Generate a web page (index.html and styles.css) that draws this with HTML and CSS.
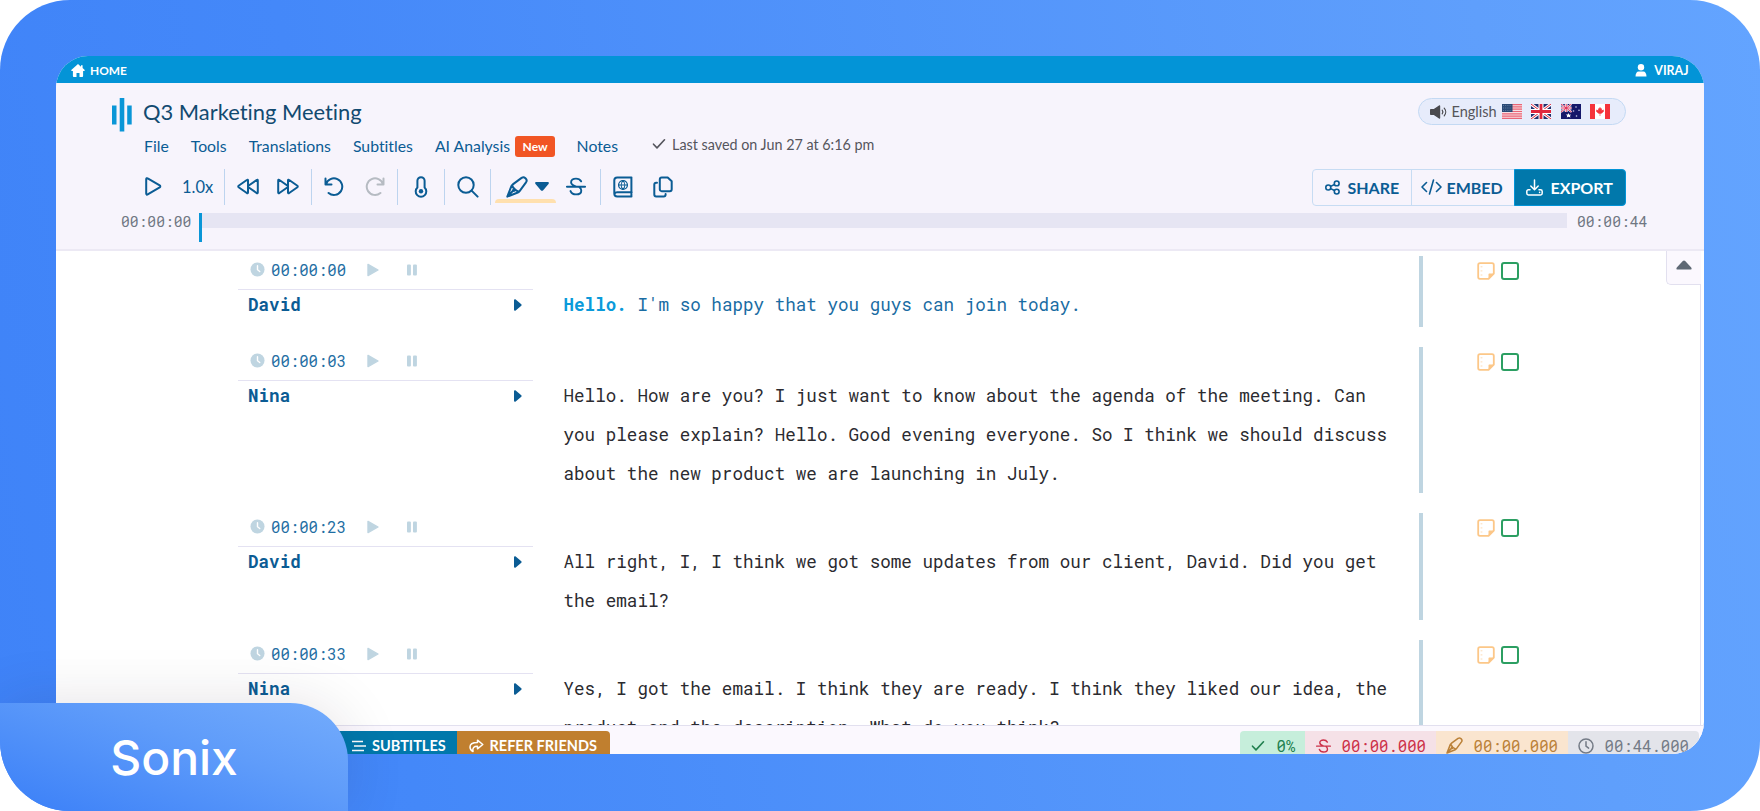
FILE: index.html
```
<!DOCTYPE html>
<html lang="en">
<head>
  <meta charset="UTF-8">
  <meta name="viewport" content="width=device-width, initial-scale=1.0">
  <title>Q3 Marketing Meeting</title>
  <link rel="stylesheet" href="styles.css">
</head>
<body>
  <!-- shared icons -->
  <svg class="defs" width="0" height="0">
    <symbol id="i-clock" viewBox="0 0 16 16"><circle cx="8" cy="8" r="7.5" fill="currentColor"/><path d="M8 4v4.2l2.4 1.9" fill="none" stroke="#fff" stroke-width="1.5" stroke-linecap="round"/></symbol>
    <symbol id="i-play" viewBox="0 0 12 14"><path d="M1 1.4v11.2l10-5.6z" fill="currentColor" stroke="currentColor" stroke-width="1.4" stroke-linejoin="round"/></symbol>
    <symbol id="i-pause" viewBox="0 0 12 12"><rect x="1" y="0.5" width="3.9" height="11" rx="1" fill="currentColor"/><rect x="7" y="0.5" width="3.9" height="11" rx="1" fill="currentColor"/></symbol>
    <symbol id="i-caret" viewBox="0 0 8 12"><path d="M0 1.2C0 .2 1 0 1.7.6l5.600 4.600c.5.5.5 1.100 0 1.600l-5.600 4.600C1 12 0 11.800 0 10.800z" fill="currentColor"/></symbol>
    <symbol id="i-note" viewBox="0 0 18 18"><path d="M3 1.200h12c1 0 1.800.8 1.800 1.800v8.600l-5.200 5.200H3c-1 0-1.800-.8-1.800-1.800V3c0-1 .8-1.800 1.800-1.800z" fill="none" stroke="currentColor" stroke-width="1.800"/><path d="M17 11.400h-4.500c-.6 0-1 .4-1 1V17z" fill="currentColor"/><path d="M3.600 4.800h1.800M3.600 8.900h1.800M3.600 13h1.800" stroke="currentColor" stroke-width="1" opacity=".6"/></symbol>
    <symbol id="i-pen" viewBox="0 0 22 22"><path d="M1.300 20.600 5.400 10.200c.3-.8.800-1.300 1.400-1.800L15.600 1.900c1.300-.9 2.500-.9 3.500.1l.8.8c1 1 1 2.200.1 3.500l-6.400 8.800c-.5.700-1.100 1.100-1.800 1.400z M6 9.200c1 2.800 3.600 5.400 6.800 6.500M1.600 20.300l5.400-5.600" fill="none" stroke="currentColor" stroke-width="2" stroke-linejoin="round"/><circle cx="7.800" cy="14.200" r="1.700" fill="currentColor"/></symbol>
    <symbol id="i-strike" viewBox="0 0 22 20"><path d="M1 10.200h20M16.600 4.300C15.300 2 13.500 1.300 11 1.300c-3.200 0-5.400 1.500-5.400 3.900 0 2.300 1.700 3.400 5 4.600M5 15c1 2.500 3.200 3.700 6 3.700 3.500 0 5.800-1.700 5.800-4.100 0-1.500-.6-2.700-1.800-3.500" fill="none" stroke="currentColor" stroke-width="2.100" stroke-linecap="round"/></symbol>
    <symbol id="i-check" viewBox="0 0 14 12"><path d="M1.500 6.200 5 9.900 12.500 1.800" fill="none" stroke="currentColor" stroke-width="1.600" stroke-linecap="round" stroke-linejoin="round"/></symbol>
  </svg>

  <div class="frame">
    <div class="window">
      <div class="topbar">
        <a class="home">
          <svg width="14" height="13" viewBox="0 0 14 13"><path d="M7 0 0 6.300l.9.8h1V12c0 .6.3 1 .9 1h2.700V9h3v4h2.700c.6 0 .9-.4.900-1V7.100h1l.9-.8-2.400-2.200V1.200H10v1.500z" fill="#fff"/></svg>
          HOME
        </a>
        <a class="user">
          <svg width="12" height="13" viewBox="0 0 12 13"><circle cx="6" cy="3.200" r="3.200" fill="#fff"/><path d="M.5 12.500c0-3 1.200-5 3.200-5h4.600c2 0 3.200 2 3.200 5z" fill="#fff"/></svg>
          VIRAJ
        </a>
      </div>

      <div class="header">
        <div class="head-row">
          <svg class="logo" width="20" height="34" viewBox="0 0 20 34"><path d="M0 7.500h4.500v19H0zM7.700 0h4.600v33.500H7.700zM15.200 7.500h4.500v19h-4.500z" fill="#0a96d7"/></svg>
          <h1 class="title">Q3 Marketing Meeting</h1>
          <div class="lang">
            <svg class="speaker" width="17" height="14" viewBox="0 0 17 14"><path d="M0 4.800c0-.5.300-.8.800-.8h3L9 .4c.6-.4 1.200-.2 1.200.5v12.200c0 .7-.6.900-1.200.5L3.800 10h-3C.3 10 0 9.700 0 9.200z" fill="#4a4a4e"/><path d="M12.200 5.200c.8 1 .8 2.600 0 3.600M14.200 3.200c2 2.200 2 5.400 0 7.600" fill="none" stroke="#4a4a4e" stroke-width="1.200" stroke-linecap="round"/></svg>
            <span class="lang-name">English</span>
            <svg class="flag" width="20" height="15" viewBox="0 0 20 15"><path fill="#f8dfe3" d="M0 0h20v15H0z"/><path d="M0 .6h20M0 2.900h20M0 5.200h20M0 7.500h20M0 9.800h20M0 12.100h20M0 14.400h20" stroke="#ea6577" stroke-width="1.200"/><path fill="#2a4a75" d="M0 0h10.500v8H0z"/><path d="M1 1.500h9M1 4h9M1 6.500h9" stroke="#6d87a8" stroke-width=".8" stroke-dasharray="1 1.200"/></svg>
            <svg class="flag" width="20" height="15" viewBox="0 0 20 15"><path fill="#22306f" d="M0 0h20v15H0z"/><path d="m0 0 20 15M20 0 0 15" stroke="#fff" stroke-width="3"/><path d="m0 0 20 15M20 0 0 15" stroke="#e0253c" stroke-width="1"/><path d="M10 0v15M0 7.500h20" stroke="#fff" stroke-width="5"/><path d="M10 0v15M0 7.500h20" stroke="#e0253c" stroke-width="2.800"/></svg>
            <svg class="flag" width="20" height="15" viewBox="0 0 20 15"><path fill="#15176a" d="M0 0h20v15H0z"/><path d="m0 0 10.500 8M10.500 0 0 8" stroke="#fff" stroke-width="1.800"/><path d="M5.200 0v8M0 4h10.500" stroke="#fff" stroke-width="2.800"/><path d="M5.200 0v8M0 4h10.500M0 0l10.500 8M10.500 0 0 8" stroke="#e0335a" stroke-width="1"/><path d="m7.500 9 .8 1.700 1.800-.2-1.200 1.400.7 1.700-2.100-.8-1.700.8.400-1.800-1.300-1.300 1.900-.1z" fill="#fff"/><g fill="#cdd0ea"><circle cx="15" cy="3" r=".8"/><circle cx="12.500" cy="7" r=".8"/><circle cx="18" cy="6.200" r=".8"/><circle cx="15.500" cy="12" r=".8"/></g></svg>
            <svg class="flag" width="20" height="15" viewBox="0 0 20 15"><path fill="#fff" d="M0 0h20v15H0z"/><path fill="#f5333b" d="M0 0h5v15H0zM15 0h5v15h-5zM10 2.800l1 1.900 1-.5-.3 2.200 1.700-.8.6 1.600-2.300 2.400-1.400.2V12h-.6V9.800l-1.400-.2L6 7.200l.6-1.600 1.700.8L8 4.200l1 .5z"/></svg>
          </div>
        </div>

        <div class="menu">
          <a class="m-file">File</a>
          <a class="m-tools">Tools</a>
          <a class="m-trans">Translations</a>
          <a class="m-subs">Subtitles</a>
          <a class="m-ai">AI Analysis</a>
          <span class="badge">New</span>
          <a class="m-notes">Notes</a>
          <span class="saved"><svg width="14" height="12"><use href="#i-check"/></svg>Last saved on Jun 27 at 6:16 pm</span>
        </div>

        <div class="toolbar">
          <div class="group g-play">
            <svg width="17" height="19" viewBox="0 0 17 19"><path d="M1.200 2.200c0-1 .7-1.300 1.500-.8l12 7c.8.500.8 1.500 0 2l-12 7c-.8.500-1.500.1-1.500-.8z" class="ln"/></svg>
            <span class="speed">1.0x</span>
          </div>
          <div class="group g-seek">
            <svg width="22" height="17" viewBox="0 0 22 17"><path d="M11 2.500v12c0 .8-.6 1-1.200.5L1.600 9.200c-.5-.4-.5-1 0-1.400L9.800 2c.6-.5 1.200-.3 1.200.5zM20.800 2.500v12c0 .8-.6 1-1.200.5l-8.200-5.800c-.5-.4-.5-1 0-1.400L19.600 2c.6-.5 1.200-.3 1.200.5z" class="ln"/></svg>
            <svg width="22" height="17" viewBox="0 0 22 17"><path d="M11 2.500v12c0 .8.600 1 1.200.5l8.200-5.800c.5-.4.5-1 0-1.400L12.200 2c-.6-.5-1.200-.3-1.200.5zM1.200 2.500v12c0 .8.600 1 1.200.5l8.200-5.800c.5-.4.5-1 0-1.400L2.400 2c-.6-.5-1.200-.3-1.200.5z" class="ln"/></svg>
          </div>
          <div class="group g-undo">
            <svg width="20" height="20" viewBox="0 0 20 20"><path d="M1.500 1.500v6h6M2 7.300A8.300 8.300 0 1 1 4.600 16" class="ln"/></svg>
            <svg class="muted" width="20" height="20" viewBox="0 0 20 20"><path d="M18.500 1.500v6h-6M18 7.300A8.300 8.300 0 1 0 15.400 16" class="ln"/></svg>
          </div>
          <div class="group g-temp">
            <svg width="14" height="22" viewBox="0 0 14 22"><path d="M7 1.200A3.600 3.600 0 0 0 3.400 4.800v6.700a5.300 5.300 0 1 0 7.200 0V4.800A3.600 3.600 0 0 0 7 1.200z" class="ln"/><circle cx="7" cy="15.300" r="2.200" fill="currentColor"/></svg>
          </div>
          <div class="group g-find">
            <svg width="22" height="22" viewBox="0 0 22 22"><circle cx="9" cy="9" r="7.700" class="ln"/><path d="m14.600 14.600 6 6" class="ln"/></svg>
          </div>
          <div class="group g-mark">
            <span class="marker">
              <svg width="22" height="22"><use href="#i-pen"/></svg>
              <svg width="14" height="9" viewBox="0 0 14 9"><path d="M1.200 0h11.600c1 0 1.400 1.100.7 1.900L8.200 8.200c-.7.700-1.700.7-2.400 0L.5 1.900C-.2 1.100.2 0 1.200 0z" fill="currentColor"/></svg>
            </span>
            <svg width="20" height="19"><use href="#i-strike"/></svg>
          </div>
          <div class="group g-last">
            <svg width="20" height="22" viewBox="0 0 20 22"><path d="M18.700 16.200H4M18.500 1.500H4.200c-1.600 0-2.900 1.200-2.900 2.800v13.200c0 1.700 1.300 3 2.900 3H18.500M18.400 1.500v19M1.500 18c.3-1.200 1.300-1.800 2.500-1.800" class="ln"/><circle cx="10" cy="9" r="4.400" fill="none" stroke="currentColor" stroke-width="1.300"/><path d="M5.600 9h8.800M10 4.600c-2.400 2.600-2.400 6.200 0 8.800 2.400-2.600 2.400-6.200 0-8.800z" fill="none" stroke="currentColor" stroke-width="1.100"/></svg>
            <svg width="20" height="22" viewBox="0 0 20 22"><path d="M8.700 1.500h6l4 3.800v8c0 1.100-.8 1.900-1.900 1.900H8.700c-1.100 0-1.900-.8-1.900-1.900V3.400c0-1.100.8-1.900 1.900-1.900z" class="ln"/><path d="M4 6.700H3.200c-1.100 0-1.900.8-1.900 1.900v10c0 1.100.8 1.900 1.900 1.900h7.500c1.100 0 1.900-.8 1.900-1.900v-.5" class="ln"/></svg>
          </div>
          <div class="actions">
            <a class="act share"><svg width="15" height="15" viewBox="0 0 15 15"><g fill="none" stroke="currentColor" stroke-width="1.600"><circle cx="3.300" cy="7.500" r="2.500"/><circle cx="11.700" cy="3.400" r="2.400"/><circle cx="11.700" cy="11.600" r="2.400"/><path d="m5.600 6.400 3.900-1.900M5.600 8.600l3.900 1.900"/></g></svg>SHARE</a>
            <a class="act embed"><svg width="21" height="16" viewBox="0 0 21 16"><path d="M5.500 3.500 1 8l4.500 4.500M15.500 3.500 20 8l-4.500 4.500M12.500 1l-4 14" fill="none" stroke="currentColor" stroke-width="1.600" stroke-linecap="round" stroke-linejoin="round"/></svg>EMBED</a>
            <a class="act export"><svg width="17" height="17" viewBox="0 0 17 17"><path d="M8.500 1v9.500M4.800 7l3.700 3.700L12.200 7M4 10.800H2.400c-.9 0-1.600.7-1.600 1.600v1.800c0 1 .7 1.700 1.600 1.700h12.200c.9 0 1.600-.7 1.600-1.700v-1.800c0-.9-.7-1.600-1.600-1.600H13" fill="none" stroke="currentColor" stroke-width="1.500" stroke-linecap="round" stroke-linejoin="round"/><circle cx="13.600" cy="13.400" r=".8" fill="currentColor"/></svg>EXPORT</a>
          </div>
        </div>

        <div class="timeline">
          <span class="time">00:00:00</span>
          <div class="track"><div class="cursor"></div></div>
          <span class="time">00:00:44</span>
        </div>
      </div>

      <div class="content">
        <div class="transcript">
          <div class="row">
            <div class="speaker-col">
              <div class="stamp"><svg class="s-clock" width="15" height="15"><use href="#i-clock"/></svg>00:00:00<svg class="s-play" width="12" height="14"><use href="#i-play"/></svg><svg class="s-pause" width="12" height="12"><use href="#i-pause"/></svg></div>
              <div class="name">David<svg width="8" height="12"><use href="#i-caret"/></svg></div>
            </div>
            <p class="text current"><b>Hello.</b> I'm so happy that you guys can join today.</p>
            <div class="marks"><svg width="18" height="18"><use href="#i-note"/></svg><i class="box"></i></div>
          </div>
          <div class="row">
            <div class="speaker-col">
              <div class="stamp"><svg class="s-clock" width="15" height="15"><use href="#i-clock"/></svg>00:00:03<svg class="s-play" width="12" height="14"><use href="#i-play"/></svg><svg class="s-pause" width="12" height="12"><use href="#i-pause"/></svg></div>
              <div class="name">Nina<svg width="8" height="12"><use href="#i-caret"/></svg></div>
            </div>
            <p class="text">Hello. How are you? I just want to know about the agenda of the meeting. Can<br>you please explain? Hello. Good evening everyone. So I think we should discuss<br>about the new product we are launching in July.</p>
            <div class="marks"><svg width="18" height="18"><use href="#i-note"/></svg><i class="box"></i></div>
          </div>
          <div class="row">
            <div class="speaker-col">
              <div class="stamp"><svg class="s-clock" width="15" height="15"><use href="#i-clock"/></svg>00:00:23<svg class="s-play" width="12" height="14"><use href="#i-play"/></svg><svg class="s-pause" width="12" height="12"><use href="#i-pause"/></svg></div>
              <div class="name">David<svg width="8" height="12"><use href="#i-caret"/></svg></div>
            </div>
            <p class="text">All right, I, I think we got some updates from our client, David. Did you get<br>the email?</p>
            <div class="marks"><svg width="18" height="18"><use href="#i-note"/></svg><i class="box"></i></div>
          </div>
          <div class="row">
            <div class="speaker-col">
              <div class="stamp"><svg class="s-clock" width="15" height="15"><use href="#i-clock"/></svg>00:00:33<svg class="s-play" width="12" height="14"><use href="#i-play"/></svg><svg class="s-pause" width="12" height="12"><use href="#i-pause"/></svg></div>
              <div class="name">Nina<svg width="8" height="12"><use href="#i-caret"/></svg></div>
            </div>
            <p class="text">Yes, I got the email. I think they are ready. I think they liked our idea, the<br>product and the description. What do you think?</p>
            <div class="marks"><svg width="18" height="18"><use href="#i-note"/></svg><i class="box"></i></div>
          </div>
        </div>
        <div class="side">
          <a class="collapse"><svg width="16" height="10" viewBox="0 0 16 10"><path d="M1.600 9.500C.4 9.500 0 8.300.8 7.400L6.800 1c.7-.7 1.700-.7 2.400 0l6 6.400c.8.900.4 2.100-.8 2.100z" fill="#5f6975"/></svg></a>
        </div>
      </div>

      <div class="footer">
        <a class="fbtn subtitles"><svg width="14" height="12" viewBox="0 0 14 12"><path d="M0 1.500h11M2 6h12M0 10.500h12" stroke="#fff" stroke-width="1.500"/></svg>SUBTITLES</a>
        <a class="fbtn refer"><svg width="15" height="14" viewBox="0 0 15 14"><path d="M8.500 1.200 13.800 5.500 8.500 9.800V7.300C5 7.300 3.200 8.500 4 12.600 2 11.500 1 9.800 1 8c0-3.200 3-4.500 7.500-4.500z" fill="none" stroke="#fff" stroke-width="1.500" stroke-linejoin="round"/></svg>REFER FRIENDS</a>
        <div class="stats">
          <span class="stat green"><svg width="14" height="12"><use href="#i-check"/></svg>0%</span>
          <span class="stat red"><svg width="15" height="14"><use href="#i-strike"/></svg>00:00.000</span>
          <span class="stat orange"><svg width="17" height="17"><use href="#i-pen"/></svg>00:00.000</span>
          <span class="stat grey"><svg width="16" height="16" viewBox="0 0 16 16"><circle cx="8" cy="8" r="7" fill="none" stroke="currentColor" stroke-width="1.500"/><path d="M8 3.800V8.200l2.600 1.900" fill="none" stroke="currentColor" stroke-width="1.500" stroke-linecap="round"/></svg>00:44.000</span>
        </div>
      </div>
    </div>
    <div class="brand">Sonix</div>
  </div>
</body>
</html>
```
FILE: styles.css
```
* {
  margin: 0;
  padding: 0;
  box-sizing: border-box;
}

body {
  width: 1760px;
  height: 811px;
  overflow: hidden;
  background: #fff;
  font-family: Lato, sans-serif;
  font-variant-ligatures: none;
  color: #0b5c94;
}

.defs {
  position: absolute;
}

svg {
  display: block;
  flex: none;
}

.ln {
  fill: none;
  stroke: currentColor;
  stroke-width: 2;
  stroke-linecap: round;
  stroke-linejoin: round;
}

.frame {
  position: relative;
  width: 1760px;
  height: 811px;
  padding: 56px;
  border-radius: 70px;
  overflow: hidden;
  background: linear-gradient(80deg, #3f83f8 0%, #4488f9 22%, #5f9ffc 85%, #63a4ff 100%);
}

.window {
  display: flex;
  flex-direction: column;
  width: 1648px;
  height: 698px;
  border-radius: 32px;
  overflow: hidden;
  background: #fff;
}

/* top bar */
.topbar {
  display: flex;
  justify-content: space-between;
  flex: none;
  height: 27px;
  padding: 2px 15.5px 0 15px;
  background: #0394d7;
  color: #fff;
  font-size: 11.9px;
  font-weight: 700;
}

.home, .user {
  display: flex;
  align-items: center;
  gap: 5px;
}

.user {
  gap: 7px;
  font-size: 12.4px;
}

/* header */
.header {
  flex: none;
  height: 168px;
  background: #f7f4fc;
  border-bottom: 2px solid #ece9f4;
}

.head-row {
  display: flex;
  height: 48px;
  padding: 15px 78.5px 0 55.5px;
}

.title {
  margin: -1px 0 0 11.5px;
  font-size: 21.9px;
  line-height: 29px;
  font-weight: 400;
  color: #124a70;
}

.lang {
  display: flex;
  align-items: center;
  width: 208px;
  height: 27px;
  margin-left: auto;
  padding-left: 11px;
  border: 1px solid #c3d9f3;
  border-radius: 14px;
  background: #e7ecfb;
  font-size: 14.5px;
  color: #55555a;
}

.lang-name {
  margin: 0 5px 0 5px;
}

.flag {
  margin-right: 9.5px;
}

.menu {
  display: flex;
  align-items: center;
  height: 30px;
  padding-left: 88px;
  font-size: 15.8px;
}

.menu a {
  margin-top: -1px;
}

.m-file, .m-tools, .m-trans, .m-subs {
  margin-right: 22px;
}

.m-ai {
  margin-right: 5px;
}

.badge {
  width: 40px;
  height: 21px;
  margin-right: 21.5px;
  border-radius: 3px;
  background: #f15524;
  color: #fff;
  font-size: 12px;
  font-weight: 700;
  line-height: 21px;
  text-align: center;
}

.saved {
  display: flex;
  align-items: center;
  gap: 6px;
  margin: -4px 0 0 34px;
  font-size: 14.35px;
  color: #55555d;
}

.toolbar {
  display: flex;
  align-items: center;
  height: 36px;
  margin-top: 8px;
  padding: 0 78.5px 0 88px;
}

.group {
  display: flex;
  align-items: center;
  height: 36px;
  padding-bottom: 1px;
  border-right: 1.5px solid #bdd4ef;
}

.g-play { width: 81px; gap: 20px; padding-left: 1px; }
.g-seek { width: 87px; gap: 18px; padding-left: 12px; }
.g-undo { width: 86px; gap: 20.5px; padding-left: 12px; }
.g-temp { width: 46.5px; padding-left: 16px; }
.g-find { width: 46px; padding-left: 12px; }
.g-mark { width: 110px; gap: 10px; padding-left: 4.5px; }
.g-last { gap: 20.5px; padding-left: 12px; border: 0; }

.speed {
  font-size: 16.5px;
}

.muted {
  color: #b6bbc2;
}

.marker {
  position: relative;
  display: flex;
  align-items: center;
  gap: 7px;
  width: 61px;
  height: 36px;
  padding-left: 11px;
}

.marker::after {
  content: '';
  position: absolute;
  left: 0;
  bottom: 2px;
  width: 61px;
  height: 4px;
  border-radius: 5px 5px 0 0;
  background: #ffe0ae;
}

.actions {
  display: flex;
  height: 37px;
  margin-left: auto;
  border: 1px solid #c7dcf3;
  border-radius: 4px;
  font-size: 16px;
  font-weight: 700;
}

.act {
  display: flex;
  align-items: center;
}

.share { width: 98px; padding-left: 12px; gap: 8px; }
.embed { width: 104px; padding-left: 9px; gap: 5px; border-left: 1px solid #c7dcf3; }

.export {
  width: 112px;
  margin: -1px;
  padding-left: 11px;
  gap: 8px;
  border: 1px solid #0394d7;
  border-radius: 0 4px 4px 0;
  background: #0178ab;
  color: #fff;
}

.timeline {
  display: flex;
  height: 30px;
  margin-top: 8px;
  padding-left: 65px;
}

.time {
  width: 78px;
  font: 14.65px/17px "Roboto Mono", "DejaVu Sans Mono", monospace;
  color: #6f7783;
}

.track {
  width: 1368px;
  height: 14.5px;
  margin-right: 10px;
  background: #e6e5f3;
}

.cursor {
  width: 3px;
  height: 29px;
  background: #0a96d7;
}

/* transcript */
.content {
  display: flex;
  flex: 1;
  min-height: 0;
  overflow: hidden;
}

.transcript {
  display: flex;
  flex-direction: column;
  gap: 20px;
  width: 1610px;
  padding: 4.5px 0 0 181.5px;
}

.row {
  display: flex;
  flex: none;
  min-height: 71px;
}

.speaker-col {
  width: 295.5px;
  font-family: "Roboto Mono", "DejaVu Sans Mono", monospace;
}

.stamp {
  display: flex;
  align-items: center;
  height: 34px;
  padding: 0 0 5px 12px;
  border-bottom: 1px solid #e4e2f2;
  font-size: 15.65px;
  color: #1f6ea3;
}

.stamp svg {
  color: #bfd5e1;
}

.s-clock { margin-right: 6.5px; }
.s-play { margin-left: 20.5px; }
.s-pause { margin-left: 27px; }

.name {
  display: flex;
  align-items: center;
  justify-content: space-between;
  height: 30px;
  padding: 0 11.5px 0 10.5px;
  font-size: 17.6px;
  font-weight: 700;
}

.text {
  width: 890px;
  padding: 29px 0 0 30.5px;
  border-right: 4px solid #bfd5e1;
  font: 17.6px/39px "Roboto Mono", "DejaVu Sans Mono", monospace;
  color: #2b2b30;
  white-space: nowrap;
}

.current {
  color: #1a6ca3;
}

.current b {
  color: #0a9ada;
}

.marks {
  display: flex;
  gap: 6px;
  margin: 6px 0 0 54px;
  color: #fcc788;
}

.box {
  width: 18px;
  height: 18px;
  border: 2px solid #2c9f62;
  border-radius: 3px;
}

.side {
  width: 35px;
  border-right: 1px solid #e2e0ef;
}

.collapse {
  display: flex;
  justify-content: center;
  width: 35px;
  height: 34px;
  padding-top: 9px;
  border: 1px solid #e2e0ef;
  border-width: 0 0 1px 1px;
  border-radius: 0 0 0 5px;
  background: #fbf8fe;
}

/* footer */
.footer {
  display: flex;
  flex: none;
  height: 29px;
  padding: 5px 5.5px 0 200.5px;
  border-top: 1.5px solid #e2e0ef;
  background: #fbf8fe;
}

.fbtn {
  display: flex;
  align-items: center;
  height: 29px;
  color: #fff;
  font-size: 14.5px;
  font-weight: 700;
}

.subtitles {
  width: 200.5px;
  padding-left: 95px;
  gap: 6.5px;
  background: #0178ab;
}

.refer {
  width: 153px;
  padding-left: 12px;
  gap: 5.5px;
  border-radius: 0 4px 0 0;
  background: #c07f2f;
}

.stats {
  display: flex;
  height: 29px;
  margin-left: auto;
  font: 15.65px "Roboto Mono", "DejaVu Sans Mono", monospace;
}

.stat {
  display: flex;
  align-items: center;
  gap: 11px;
  padding-left: 11px;
}

.green { width: 65px; gap: 12px; background: #c6eedb; color: #21804f; border-radius: 4px 0 0 0; }
.red { width: 131px; background: #f5e1e7; color: #cc3048; }
.orange { width: 132px; background: #fae5cf; color: #bb8138; padding-left: 10px; }
.grey { width: 131px; background: #e3e4ea; color: #747b86; padding-left: 10px; border-radius: 0 4px 0 0; }

/* label laid over the lower left corner */
.brand {
  position: absolute;
  left: 0;
  bottom: 0;
  width: 348px;
  height: 108.5px;
  border-radius: 0 58px 0 0;
  background: linear-gradient(20deg, #3f83f8 8%, #5f9cfa 60%, #74acfc 100%);
  box-shadow: 0 0 60px rgba(30, 20, 40, 0.12);
  color: #fff;
  font: 500 48px/109px Inter, sans-serif;
  text-align: center;
}
```
